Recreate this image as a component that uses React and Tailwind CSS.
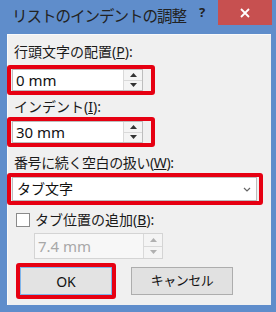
import React from "react";

const FONT = { fontFamily: '"Noto Sans", "Noto Sans CJK JP", sans-serif' };

function Spinner({ disabled }) {
  const c = disabled ? "#b0b0b0" : "#333";
  return (
    <div className="flex flex-col w-[19px] h-full border-l border-[#d9d9d9]">
      <div className="flex-1 flex items-center justify-center bg-[#f4f4f4] border-b border-[#d9d9d9]">
        <svg width="7" height="4" viewBox="0 0 7 4"><path d="M0 4 L3.5 0 L7 4 Z" fill={c} /></svg>
      </div>
      <div className="flex-1 flex items-center justify-center bg-[#f4f4f4]">
        <svg width="7" height="4" viewBox="0 0 7 4"><path d="M0 0 L3.5 4 L7 0 Z" fill={c} /></svg>
      </div>
    </div>
  );
}

function SpinInput({ value }) {
  return (
    <div className="w-[148px] h-[30px] border-[4px] border-[#e60012] rounded-[3px] flex items-center pl-[1px]">
      <div className="w-[131px] h-[22px] bg-white border border-[#bdbdbd] flex items-stretch">
        <div className="flex-1 flex items-center pl-[3px] text-[15px] text-[#111] leading-none">{value}</div>
        <Spinner />
      </div>
    </div>
  );
}

export default function App() {
  return (
    <div className="w-[276px] h-[312px] bg-[#5f8dcb] flex flex-col" style={FONT}>
      <div className="relative h-[34px] shrink-0">
        <div className="absolute left-[12px] top-[4px] tracking-[-1px] text-[#222] leading-[24px]" style={{ fontSize: "15.5px" }}>
          リストのインデントの調整
        </div>
        <div className="absolute left-[199px] top-[5px] text-[13px] font-bold text-[#222] leading-[14px]">?</div>
        <div className="absolute left-[218px] top-0 w-[54px] h-[25px] bg-[#c75050] flex items-center justify-center">
          <svg width="10" height="10" viewBox="0 0 10 10">
            <path d="M1 1 L9 9 M9 1 L1 9" stroke="#fff" strokeWidth="1.8" />
          </svg>
        </div>
      </div>

      <div className="ml-[7px] mr-[5px] h-[271px] bg-[#f0f0f0] border-t border-l border-[#fafafa] flex flex-col">
        <div className="pl-[6px] mt-[7px] h-[20px] leading-[20px] text-[14px] text-[#1a1a1a]">
          行頭文字の配置(<span className="underline">P</span>):
        </div>
        <div className="mt-[3px] -ml-[1px]">
          <SpinInput value="0 mm" />
        </div>

        <div className="pl-[6px] mt-[2px] h-[20px] leading-[20px] text-[14px] text-[#1a1a1a]">
          インデント(<span className="underline">I</span>):
        </div>
        <div className="-ml-[1px]">
          <SpinInput value="30 mm" />
        </div>

        <div className="pl-[6px] mt-[6px] h-[20px] leading-[20px] text-[14px] tracking-[-0.4px] text-[#1a1a1a]">
          番号に続く空白の扱い(<span className="underline">W</span>):
        </div>
        <div className="-ml-[1px] w-[256px] h-[32px] border-[4px] border-[#e60012] rounded-[3px] flex items-center pl-[1px]">
          <div className="w-[245px] h-[24px] bg-white border border-[#bdbdbd] flex items-center">
            <div className="flex-1 pl-[4px] text-[14px] text-[#111] leading-none">タブ文字</div>
            <div className="w-[18px] flex items-center justify-center">
              <svg width="8" height="5" viewBox="0 0 8 5"><path d="M1 1 L4 4 L7 1" stroke="#666" strokeWidth="1.2" fill="none" /></svg>
            </div>
          </div>
        </div>

        <div className="mt-[5px] pl-[8px] h-[20px] flex items-center gap-[5px]">
          <div className="w-[14px] h-[14px] bg-white border border-[#8a8a8a]" />
          <div className="text-[14px] leading-[20px] text-[#1a1a1a]">
            タブ位置の追加(<span className="underline">B</span>):
          </div>
        </div>

        <div className="mt-[3px] ml-[26px] w-[129px] h-[26px] bg-[#f7f7f7] border border-[#d4d4d4] flex items-stretch">
          <div className="flex-1 flex items-center pl-[3px] text-[15px] text-[#a8a8a8] leading-none">7.4 mm</div>
          <Spinner disabled />
        </div>

        <div className="mt-[4px] pl-[8px] flex items-center gap-[15px]">
          <div className="w-[100px] h-[36px] border-[4px] border-[#e60012] rounded-[3px] flex items-center justify-center bg-[#e5f1fb]">
            <div className="w-full h-full bg-[#e3e3e3] border border-[#7eb4ea] flex items-center justify-center text-[14px] text-[#111]">
              OK
            </div>
          </div>
          <div className="w-[102px] h-[28px] bg-[#e1e1e1] border border-[#adadad] flex items-center justify-center text-[13px] tracking-[-0.5px] text-[#111]">
            キャンセル
          </div>
        </div>
      </div>
    </div>
  );
}
